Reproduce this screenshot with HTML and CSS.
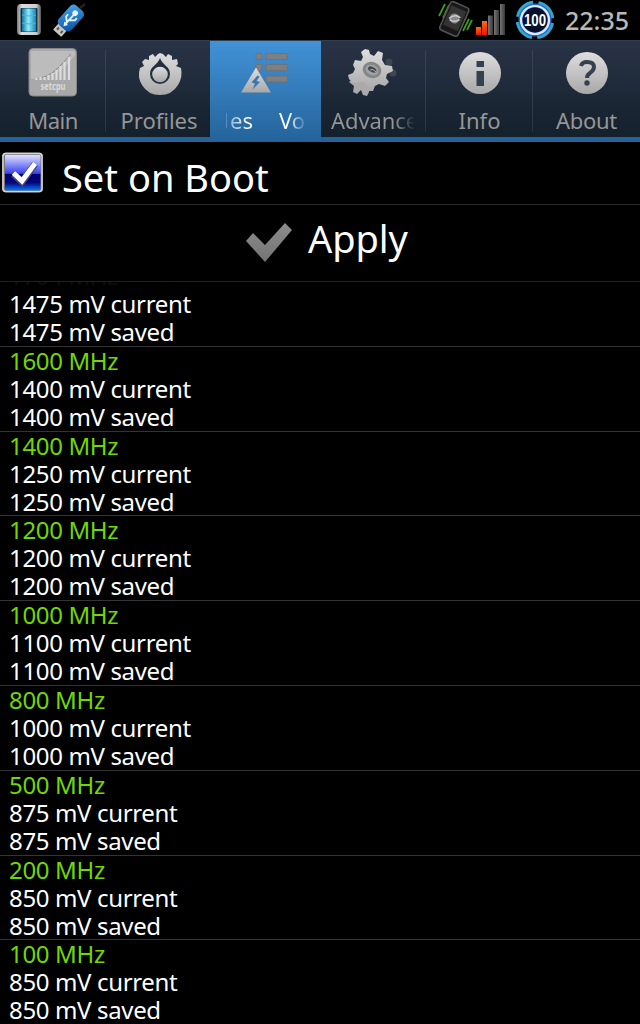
FILE: index.html
```html
<!DOCTYPE html>
<html lang="en">
<head>
<meta charset="utf-8">
<title>SetCPU</title>
<link rel="stylesheet" href="styles.css">
</head>
<body>
<svg class="defs" width="0" height="0" aria-hidden="true">
  <defs>
    <linearGradient id="silver" x1="0" y1="0" x2="0" y2="1"><stop offset="0" stop-color="#dedede"/><stop offset="1" stop-color="#a8a8a8"/></linearGradient>
    <linearGradient id="metal" x1="0" y1="0" x2="1" y2="0"><stop offset="0" stop-color="#777"/><stop offset=".2" stop-color="#ddd"/><stop offset=".8" stop-color="#ccc"/><stop offset="1" stop-color="#555"/></linearGradient>
    <linearGradient id="cyan" x1="0" y1="0" x2="1" y2="0"><stop offset="0" stop-color="#176f9b"/><stop offset=".45" stop-color="#8cecff"/><stop offset="1" stop-color="#1384b4"/></linearGradient>
    <linearGradient id="usb" x1="0" y1="0" x2="1" y2="1"><stop offset="0" stop-color="#4ba6e8"/><stop offset="1" stop-color="#0750a0"/></linearGradient>
    <linearGradient id="bar" x1="0" y1="0" x2="1" y2="0"><stop offset="0" stop-color="#777"/><stop offset="1" stop-color="#383838"/></linearGradient>
    <linearGradient id="hot" x1="0" y1="0" x2="0" y2="1"><stop offset="0" stop-color="#ff6a18"/><stop offset="1" stop-color="#e81600"/></linearGradient>
    <linearGradient id="box" x1="0" y1="0" x2="0" y2="1"><stop offset="0" stop-color="#e2e0ff"/><stop offset=".52" stop-color="#3544f0"/><stop offset=".53" stop-color="#02006c"/><stop offset=".78" stop-color="#04047e"/><stop offset="1" stop-color="#0878f0"/></linearGradient>
    <linearGradient id="tick" x1="0" y1="0" x2="0" y2="1"><stop offset="0" stop-color="#8c8c8c"/><stop offset="1" stop-color="#747474"/></linearGradient>
  </defs>
</svg>

<header class="status">
  <svg class="status-left" width="100" height="40" viewBox="0 0 100 40">
    <rect x="17" y="4" width="24" height="31" rx="4" fill="url(#metal)"/>
    <rect x="20.500" y="8" width="17" height="24" rx="1" fill="#0b3348"/>
    <rect x="22" y="8.500" width="14" height="23" fill="url(#cyan)"/>
    <path d="M22 15q7 2 14 0M22 23q7 2 14 0" fill="none" stroke="#4fb4d2"/>
    <path d="M80 8l5-4" stroke="#222" stroke-width="2.500"/>
    <g transform="translate(69.500 19.500) rotate(42)">
      <rect x="-5.500" y="8" width="11" height="10.500" rx="1" fill="#c9c4bf"/>
      <path d="M-2.500 13v3M2.500 13v3" stroke="#555" stroke-width="2"/>
      <rect x="-8.500" y="-15" width="17" height="26" rx="4.500" fill="url(#usb)"/>
      <path d="M0 6V-7M0 4L-4.500 0v-3M0 1L4.500-3v-3" fill="none" stroke="#e8f7ff" stroke-width="1.800"/>
      <circle cx="0" cy="-8.500" r="2.800" fill="#e8f7ff"/><path d="M-2.500 5L0 9L2.500 5z" fill="#e8f7ff"/>
    </g>
  </svg>
  <svg class="status-right" width="132" height="40" viewBox="432 0 132 40">
    <path d="M445 4l-6 12M449 5l-6 13M451 8l-5 12M466 17l-6 13M469 19l-6 12M472 20l-5 10" stroke="#3f9d1f" stroke-width="1.700"/>
    <g transform="translate(454.500 18.500) rotate(24)">
      <rect x="-10" y="-15" width="20" height="31" rx="3" fill="#181818" stroke="#555" stroke-width="1.500"/>
      <rect x="-8" y="-11" width="16" height="21" fill="#343434"/>
      <circle r="5" fill="#888"/><path d="M-5 2Q-1-5 5-3M-4 3Q2 4 5-1" fill="none" stroke="#ccc" stroke-width="1.500"/>
    </g>
    <rect x="476" y="27" width="5" height="8" fill="url(#hot)"/>
    <rect x="482" y="21" width="5" height="14" fill="url(#hot)"/>
    <rect x="488" y="15.500" width="5" height="19.500" fill="url(#bar)"/>
    <rect x="494" y="10" width="5" height="25" fill="url(#bar)"/>
    <rect x="500" y="4" width="5" height="31" fill="url(#bar)"/>
    <circle cx="535" cy="20" r="17.500" fill="none" stroke="#31a8cb" stroke-width="3.500" stroke-dasharray="22 5.490" stroke-dashoffset="-3"/>
    <circle cx="535" cy="20" r="14.500" fill="#06102a" stroke="#2867d2" stroke-width="4"/>
    <circle cx="535" cy="20" r="14" fill="none" stroke="#dbeaff" stroke-width="2.200"/>
    <text class="battery-text" x="535" y="26" text-anchor="middle" textLength="22" lengthAdjust="spacingAndGlyphs">100</text>
  </svg>
  <span class="clock">22:35</span>
</header>

<nav class="tabs">
  <div class="tab t-main">
    <svg width="52" height="52" viewBox="0 0 52 52">
      <rect x="2" y="1.500" width="47.500" height="47.500" rx="4" fill="#a9a9a9" stroke="#858585"/>
      <path d="M4 4h44v4Q33 28 22 29Q14 32 4 32z" fill="#bcbcbc"/>
      <path d="M9 32Q20 30 25 26Q31 22 44 7" fill="none" stroke="#888"/>
      <path d="M9.500 33v-2M13.500 33v-3M17.500 33v-3M21.500 33v-5M25.500 33v-7M29.500 33v-10M33.500 33v-14M37.500 33v-18M42 33V10" stroke="#ddd" stroke-width="2.200"/>
      <text class="setcpu" x="26" y="42.500" text-anchor="middle" textLength="25" lengthAdjust="spacingAndGlyphs">setcpu</text>
    </svg>
    <span class="label w-main">Main</span>
  </div>
  <div class="tab t-profiles">
    <svg width="52" height="52" viewBox="0 0 52 52">
      <g transform="translate(1 1)">
        <path d="M19 6L21 9L24 6L26 5L29 6L32 9L34 6L38 8V12L43 11L44 16L42 18L47 20Q49 29 44 37Q38 47 26 47Q14 47 8 37Q3 29 6 20L10 18L8 14L11 11L15 12V8z" fill="url(#silver)"/>
        <path d="M26 10C24 17 16 18 16 26A10 10 0 0 0 36 26C36 18 28 17 26 10z" fill="#232f40"/>
        <circle cx="26" cy="26.500" r="7.800" fill="url(#silver)"/>
      </g>
    </svg>
    <span class="label w-profiles">Profiles</span>
  </div>
  <div class="tab t-volt active">
    <svg width="52" height="52" viewBox="0 0 52 52">
      <g transform="translate(0 1.500)">
        <g fill="#7d7f81" stroke="#6c7379"><rect x="16" y="5" width="6" height="6" rx="1"/><rect x="26" y="5" width="21.500" height="6" rx="1"/><rect x="16" y="16" width="6" height="6" rx="1"/><rect x="26" y="16" width="21.500" height="6" rx="1"/><rect x="26" y="27.500" width="21.500" height="6" rx="1"/></g>
        <path d="M16 19L31 44H1z" fill="url(#silver)"/>
        <path d="M17.500 27L11.500 34L15 35L12.500 41L20 33.500L16.500 32.500L19.500 28z" fill="#3577b2"/>
      </g>
    </svg>
    <span class="label marquee"><span class="w-es">es</span><span class="w-vo">Vo</span></span>
  </div>
  <div class="tab t-adv">
    <svg width="52" height="52" viewBox="0 0 52 52">
      <g transform="translate(-7 1)">
        <g fill="#3c4652"><circle cx="48" cy="14" r="3.500"/><circle cx="52" cy="25" r="3.500"/></g>
        <path d="M15 28l10 3l4 8l-1 5l-2 4l-4-1l-2-5l-4 4l-4-2l1-6l-5-4z" fill="#aaa"/>
        <path d="M24 1L28 2L29 6L33 8L37 3L42 5L41 12L44 17L51 18L52 23L46 26L45 30L48 34L44 38L38 36L34 38L32 43L27 43L26 37L22 34L12 35L8 31L7 27L12 25L14 21L12 17L14 12L20 13L22 9L20 4z" fill="url(#silver)"/>
        <ellipse cx="31" cy="22" rx="9.500" ry="8" transform="rotate(20 31 22)" fill="#868686"/><ellipse cx="31" cy="22" rx="6.500" ry="5" transform="rotate(20 31 22)" fill="#a2a2a2"/><ellipse cx="31" cy="21.500" rx="4.500" ry="2.500" transform="rotate(28 31 22)" fill="#414a55"/><path d="M29 22q3-2 6 2" stroke="#aaa" fill="none"/>
      </g>
    </svg>
    <span class="label fade"><span class="w-adv">Advance</span></span>
  </div>
  <div class="tab t-info">
    <svg width="52" height="52" viewBox="0 0 52 52">
      <circle cx="26" cy="26" r="21" fill="url(#silver)"/><path d="M22.500 14h7.500v6h-7.500zM22.500 24h7.500v15h-7.500z" fill="#354151"/>
    </svg>
    <span class="label w-info">Info</span>
  </div>
  <div class="tab t-about">
    <svg width="52" height="52" viewBox="0 0 52 52">
      <circle cx="26" cy="26" r="21" fill="url(#silver)"/><path d="M20 19Q21 15 26 15Q33 15 33 20Q33 23 29 26Q26 28 26 31" fill="none" stroke="#354151" stroke-width="4"/><circle cx="26" cy="36" r="2.700" fill="#354151"/>
    </svg>
    <span class="label w-about">About</span>
  </div>
</nav>

<section class="boot">
  <svg width="46" height="44" viewBox="0 0 46 44">
    <rect x="2" y="1.500" width="41" height="40" rx="4" fill="#777"/><rect x="3" y="2.500" width="39" height="38" rx="3" fill="none" stroke="#d6d6d6" stroke-width="1.500"/>
    <rect x="5" y="4" width="35.500" height="35.500" rx="1" fill="url(#box)"/>
    <path d="M13.500 23L22 31L35 13" fill="none" stroke="#424282" stroke-width="7"/><path d="M13.500 22L22 30L35 12.500" fill="none" stroke="#fff" stroke-width="5"/>
  </svg>
  <span class="w-boot">Set on Boot</span>
</section>
<section class="apply">
  <svg width="48" height="42" viewBox="0 0 48 42"><path d="M1 19L8 11L20 23L40 1L47 8L20 40z" fill="url(#tick)"/></svg>
  <span class="w-apply">Apply</span>
</section>

<main class="list">
  <div class="row first"><span class="mhz ghost">1704 MHz</span><span class="cur">1475 mV current</span><span class="sav">1475 mV saved</span></div>
  <div class="row"><span class="mhz">1600 MHz</span><span class="cur">1400 mV current</span><span class="sav">1400 mV saved</span></div>
  <div class="row"><span class="mhz">1400 MHz</span><span class="cur">1250 mV current</span><span class="sav">1250 mV saved</span></div>
  <div class="row"><span class="mhz">1200 MHz</span><span class="cur">1200 mV current</span><span class="sav">1200 mV saved</span></div>
  <div class="row"><span class="mhz">1000 MHz</span><span class="cur">1100 mV current</span><span class="sav">1100 mV saved</span></div>
  <div class="row"><span class="mhz">800 MHz</span><span class="cur">1000 mV current</span><span class="sav">1000 mV saved</span></div>
  <div class="row"><span class="mhz">500 MHz</span><span class="cur">875 mV current</span><span class="sav">875 mV saved</span></div>
  <div class="row"><span class="mhz">200 MHz</span><span class="cur">850 mV current</span><span class="sav">850 mV saved</span></div>
  <div class="row"><span class="mhz">100 MHz</span><span class="cur">850 mV current</span><span class="sav">850 mV saved</span></div>
</main>
</body>
</html>
```
FILE: styles.css
```css
* { box-sizing: border-box; }
body { margin: 0; width: 640px; height: 1024px; overflow: hidden; background: #000; color: #fff; font-family: "Noto Sans", "Open Sans", sans-serif; }
svg { display: block; flex: none; }
.defs { position: absolute; }
.status { display: flex; height: 40px; }
.status-right { margin-left: 332px; }
.battery-text { font: bold 17px "Liberation Sans", sans-serif; fill: #fff; }
.clock { margin-left: 1px; color: #b8b8b8; font-size: 25px; font-weight: 500; line-height: 41px; white-space: nowrap; }
.tabs { display: flex; height: 102px; border-top: 1px solid #303e4e; border-bottom: 5px solid #24639a; background: linear-gradient(#293346, #14202c); }
.tab { display: flex; flex-direction: column; align-items: center; flex: none; height: 96px; padding-top: 6px; color: #969696; background: linear-gradient(#394454, #283644) right 9px / 1px 82px no-repeat; }
.t-main { width: 106px; }
.t-profiles { width: 104px; padding-left: 2px; background: none; }
.t-volt { width: 111px; }
.t-adv { width: 105px; }
.t-info { width: 107px; }
.t-about { width: 107px; background: none; }
.active { height: 101px; background: linear-gradient(#4292d7, #24639a); color: #dce8f2; }
.label { margin-top: 6px; font-size: 22px; line-height: 30px; white-space: nowrap; }
.w-main { letter-spacing: -0.5px; }
.w-about { letter-spacing: -0.3px; }
.marquee { display: flex; align-self: flex-start; gap: 26px; margin-left: 16px; background: linear-gradient(#4f8fc4, #4f8fc4) 0 8px / 1px 15px no-repeat; }
.w-es { margin-left: 4px; background: linear-gradient(90deg, #8db6da, #fff 75%); background-clip: text; color: transparent; }
.w-vo { background: linear-gradient(90deg, #fff 35%, #3f7cb2); background-clip: text; color: transparent; }
.fade { align-self: flex-start; margin-left: 10px; width: 83px; overflow: hidden; letter-spacing: -0.1px; }
.w-adv { background: linear-gradient(90deg, #969696 72%, #202b38 96%); background-clip: text; color: transparent; }
.setcpu { font: bold 10px "Noto Sans", sans-serif; fill: #d8d8d8; }
.boot { display: flex; height: 63px; padding: 9px 0 0 0; border-bottom: 1px solid #2a2a2a; font-size: 38px; line-height: 52px; }
.boot span { margin-left: 16px; white-space: nowrap; }
.apply { display: flex; height: 77px; padding: 17px 0 0 245px; border-bottom: 1px solid #202020; font-size: 38px; line-height: 32px; }
.apply span { margin-left: 15px; letter-spacing: -0.1px; }
.list { height: 742px; overflow: hidden; }
.row { display: flex; flex-direction: column; height: 84.8px; padding-left: 9px; border-bottom: 1px solid #343434; font-size: 24px; line-height: 28px; letter-spacing: -0.35px; white-space: nowrap; }
.row.first { margin-top: -20px; }
.mhz { color: #70d800; }
.ghost { color: #0c1004; }
```
